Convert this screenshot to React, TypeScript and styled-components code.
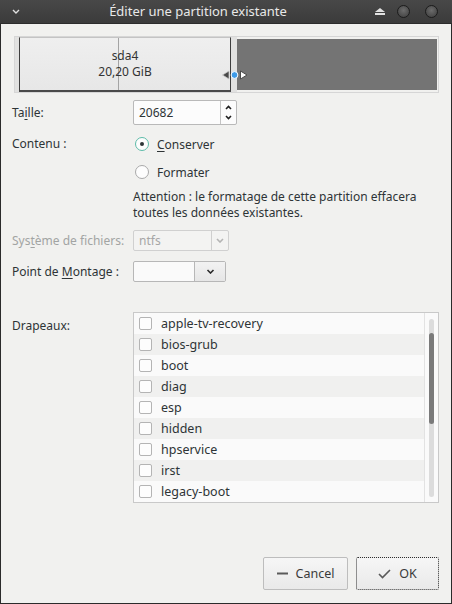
import React from 'react';
import styled, { createGlobalStyle } from 'styled-components';

const Global = createGlobalStyle`
  html, body { margin: 0; padding: 0; }
  body {
    font-family: "Noto Sans", "DejaVu Sans", sans-serif;
    font-size: 12px;
    color: #2e3436;
    background: #f1f1ef;
  }
  * { box-sizing: border-box; }
`;

const Window = styled.div`
  width: 452px;
  height: 604px;
  display: flex;
  flex-direction: column;
  background: #f1f1ef;
`;

const TitleBar = styled.div`
  height: 24px;
  flex: none;
  display: flex;
  align-items: center;
  background: linear-gradient(#484848, #3b3b3b);
  border-bottom: 1px solid #2c2c2c;
  color: #e8e8e8;
`;

const TitleLeft = styled.div`
  width: 28px;
  display: flex;
  align-items: center;
  padding-left: 12px;
`;

const TitleText = styled.div`
  flex: 1;
  text-align: center;
  font-size: 13px;
  line-height: 23px;
  white-space: nowrap;
`;

const TitleRight = styled.div`
  width: 84px;
  display: flex;
  align-items: center;
  padding-left: 7px;
`;

const WinCircle = styled.div<{ $ml: number }>`
  width: 13px;
  height: 13px;
  margin-left: ${p => p.$ml}px;
  border-radius: 50%;
  border: 1px solid #1c1c1c;
  background: radial-gradient(circle at 50% 40%, #6c6c6c, #4a4a4a 70%);
`;

const Body = styled.div`
  flex: 1;
  display: flex;
  flex-direction: column;
  border: 1px solid #2b2b2b;
  border-top: none;
  padding: 12px 12px 13px 11px;
`;

const PartFrame = styled.div`
  position: relative;
  margin-left: 2px;
  height: 57px;
  display: flex;
  border: 1px solid #d6d6d6;
`;

const Dotted = styled.div<{ $w: number }>`
  width: ${p => p.$w}px;
  flex: none;
  background-image: radial-gradient(#cfcfcf 0.6px, transparent 0.8px);
  background-size: 2px 2px;
`;

const PartBox = styled.div`
  position: relative;
  width: 212px;
  flex: none;
  display: flex;
  flex-direction: column;
  align-items: center;
  justify-content: center;
  line-height: 16px;
  color: #333;
  background: linear-gradient(#efefef, #e7e7e7);
  border-left: 1px solid #3e3e3e;
  border-right: 1px solid #3e3e3e;
  border-bottom: 2px solid #4a4a4a;
  border-top: 1px solid #c4c4c4;
  &::before {
    content: "";
    position: absolute;
    left: 98px;
    top: 0;
    bottom: 0;
    width: 1px;
    background: #a4a4a4;
  }
`;

const PartLabel = styled.span`
  position: relative;
`;

const Unallocated = styled.div`
  width: 200px;
  flex: none;
  margin: 2px 0;
  background: #747474;
`;

const Handle = styled.svg`
  position: absolute;
  left: 206px;
  top: 32px;
`;

const FieldRow = styled.div<{ $mt: number; $h?: number }>`
  display: flex;
  align-items: ${p => (p.$h ? 'center' : 'flex-start')};
  margin-top: ${p => p.$mt}px;
  ${p => (p.$h ? `height: ${p.$h}px;` : '')}
`;

const Label = styled.div<{ $disabled?: boolean; $pt?: number }>`
  width: 121px;
  flex: none;
  line-height: 16px;
  padding-top: ${p => p.$pt ?? 0}px;
  color: ${p => (p.$disabled ? '#a2a4a3' : '#2e3436')};
  white-space: nowrap;
`;

const Mn = styled.span`
  text-decoration: underline;
  text-underline-offset: 2px;
`;

const SpinBox = styled.div`
  width: 104px;
  height: 25px;
  display: flex;
  border: 1px solid #b9b9b9;
  border-radius: 2px;
  background: #fcfcfc;
`;

const SpinValue = styled.div`
  flex: 1;
  padding-left: 5px;
  line-height: 23px;
  border-right: 1px solid #c4c4c4;
`;

const SpinButtons = styled.div`
  width: 15px;
  display: flex;
  flex-direction: column;
  align-items: center;
  justify-content: space-around;
  padding: 2px 0;
`;

const ControlCol = styled.div`
  display: flex;
  flex-direction: column;
`;

const RadioRow = styled.div`
  height: 28px;
  display: flex;
  align-items: center;
  padding-left: 2px;
  margin-top: ${'-6px'};
  &:first-child { margin-top: 0; }
`;

const RadioLine = styled.div`
  height: 28px;
  display: flex;
  align-items: center;
  padding-left: 2px;
  gap: 8px;
`;

const RadioCircle = styled.div<{ $checked?: boolean }>`
  width: 14px;
  height: 14px;
  border-radius: 50%;
  border: 1px solid ${p => (p.$checked ? '#5dbba8' : '#a9a9a9')};
  background: #fdfdfd;
  display: flex;
  align-items: center;
  justify-content: center;
  &::after {
    content: "";
    width: 4px;
    height: 4px;
    border-radius: 50%;
    background: ${p => (p.$checked ? '#2e3436' : 'transparent')};
  }
`;

const Note = styled.div`
  margin-top: 3px;
  line-height: 16px;
  width: 300px;
`;

const Combo = styled.div<{ $w: number; $disabled?: boolean }>`
  width: ${p => p.$w}px;
  height: 21px;
  display: flex;
  border: 1px solid ${p => (p.$disabled ? '#d0d0d0' : '#b7b7b7')};
  border-radius: 2px;
  background: ${p => (p.$disabled ? '#f3f3f2' : '#fafafa')};
  color: ${p => (p.$disabled ? '#a6a6a6' : '#2e3436')};
`;

const ComboText = styled.div`
  flex: 1;
  padding-left: 5px;
  line-height: 19px;
`;

const ComboButton = styled.div<{ $w: number; $disabled?: boolean }>`
  width: ${p => p.$w}px;
  display: flex;
  align-items: center;
  justify-content: center;
  border-left: 1px solid ${p => (p.$disabled ? '#cfcfcf' : '#b7b7b7')};
  background: ${p => (p.$disabled ? 'transparent' : 'linear-gradient(#f2f2f2, #e6e6e6)')};
`;

const ListBox = styled.div`
  width: 307px;
  height: 191px;
  display: flex;
  border: 1px solid #c9c9c9;
  background: #fafafa;
`;

const Rows = styled.div`
  flex: 1;
  display: flex;
  flex-direction: column;
`;

const FlagRow = styled.div<{ $alt: boolean }>`
  height: 21px;
  display: flex;
  align-items: center;
  padding-left: 5px;
  gap: 9px;
  font-size: 12.5px;
  background: ${p => (p.$alt ? '#f0f0ef' : '#fafafa')};
`;

const CheckBox = styled.div`
  width: 13px;
  height: 13px;
  border: 1px solid #b4b4b4;
  border-radius: 2px;
  background: #fdfdfd;
`;

const ScrollCol = styled.div`
  width: 14px;
  border-left: 1px solid #e2e2e2;
  display: flex;
  justify-content: center;
  padding: 6px 0 5px;
`;

const Trough = styled.div`
  width: 5px;
  border-radius: 3px;
  background: #dcdcdc;
  display: flex;
  flex-direction: column;
`;

const Thumb = styled.div`
  margin-top: 14px;
  height: 91px;
  border-radius: 3px;
  background: #7a7a7a;
`;

const ButtonRow = styled.div`
  margin-top: auto;
  display: flex;
  justify-content: flex-end;
  gap: 8px;
`;

const Button = styled.div<{ $w: number; $focus?: boolean }>`
  width: ${p => p.$w}px;
  height: 33px;
  display: flex;
  align-items: center;
  justify-content: center;
  gap: 8px;
  font-size: 12.5px;
  color: #3a3a3a;
  border: 1px ${p => (p.$focus ? 'dotted #2e2e2e' : 'solid #bdbdbd')};
  border-radius: 2px;
  background: linear-gradient(#f6f6f6, #e9e9e9);
`;

const flags = [
  'apple-tv-recovery',
  'bios-grub',
  'boot',
  'diag',
  'esp',
  'hidden',
  'hpservice',
  'irst',
  'legacy-boot',
];

const Chevron = ({ color = '#2e3436', w = 8 }: { color?: string; w?: number }) => (
  <svg width={w} height={5} viewBox="0 0 8 5">
    <polyline points="1,1 4,4 7,1" fill="none" stroke={color} strokeWidth="1.6" />
  </svg>
);

export default function App() {
  return (
    <>
      <Global />
      <Window>
        <TitleBar>
          <TitleLeft>
            <svg width="8" height="5" viewBox="0 0 8 5">
              <polyline points="1,1 4,4 7,1" fill="none" stroke="#e0e0e0" strokeWidth="1.4" />
            </svg>
          </TitleLeft>
          <TitleText>Éditer une partition existante</TitleText>
          <TitleRight>
            <svg width="10" height="7" viewBox="0 0 10 7">
              <polygon points="5,0 10,4 0,4" fill="#e2e2e2" />
              <rect x="0" y="5" width="10" height="2" fill="#e2e2e2" />
            </svg>
            <WinCircle $ml={12} />
            <WinCircle $ml={15} />
          </TitleRight>
        </TitleBar>
        <Body>
          <PartFrame>
            <Dotted $w={4} />
            <PartBox>
              <PartLabel>sda4</PartLabel>
              <PartLabel>20,20 GiB</PartLabel>
            </PartBox>
            <Dotted $w={6} />
            <Unallocated />
            <Handle width="28" height="12" viewBox="0 0 28 12">
              <polygon points="1.5,6 8,2 8,10" fill="#4a4a4a" stroke="#c8c8c8" strokeWidth="0.8" />
              <circle cx="13.5" cy="6" r="3.4" fill="#3d9be9" stroke="#ffffff" strokeWidth="1" />
              <polygon points="26,6 19.5,2 19.5,10" fill="#ffffff" stroke="#4a4a4a" strokeWidth="1" />
            </Handle>
          </PartFrame>

          <FieldRow $mt={7} $h={25}>
            <Label>
              Ta<Mn>i</Mn>lle:
            </Label>
            <SpinBox>
              <SpinValue>20682</SpinValue>
              <SpinButtons>
                <svg width="7" height="5" viewBox="0 0 7 5">
                  <polyline points="1,4 3.5,1.5 6,4" fill="none" stroke="#1e1e1e" strokeWidth="1.6" />
                </svg>
                <svg width="7" height="5" viewBox="0 0 7 5">
                  <polyline points="1,1 3.5,3.5 6,1" fill="none" stroke="#1e1e1e" strokeWidth="1.6" />
                </svg>
              </SpinButtons>
            </SpinBox>
          </FieldRow>

          <FieldRow $mt={5}>
            <Label $pt={6}>Contenu :</Label>
            <ControlCol>
              <RadioLine>
                <RadioCircle $checked />
                <span>
                  <Mn>C</Mn>onserver
                </span>
              </RadioLine>
              <RadioLine>
                <RadioCircle />
                <span>Formater</span>
              </RadioLine>
              <Note>
                Attention : le formatage de cette partition effacera
                <br />
                toutes les données existantes.
              </Note>
            </ControlCol>
          </FieldRow>

          <FieldRow $mt={9} $h={21}>
            <Label $disabled>
              Sys<Mn>t</Mn>ème de fichiers:
            </Label>
            <Combo $w={96} $disabled>
              <ComboText>ntfs</ComboText>
              <ComboButton $w={17} $disabled>
                <Chevron color="#b4b4b4" />
              </ComboButton>
            </Combo>
          </FieldRow>

          <FieldRow $mt={10} $h={21}>
            <Label>
              Point de <Mn>M</Mn>ontage :
            </Label>
            <Combo $w={93}>
              <ComboText />
              <ComboButton $w={31}>
                <Chevron color="#2a2a2a" w={9} />
              </ComboButton>
            </Combo>
          </FieldRow>

          <FieldRow $mt={30}>
            <Label $pt={6}>Drapeaux:</Label>
            <ListBox>
              <Rows>
                {flags.map((f, i) => (
                  <FlagRow key={f} $alt={i % 2 === 1}>
                    <CheckBox />
                    <span>{f}</span>
                  </FlagRow>
                ))}
              </Rows>
              <ScrollCol>
                <Trough>
                  <Thumb />
                </Trough>
              </ScrollCol>
            </ListBox>
          </FieldRow>

          <ButtonRow>
            <Button $w={85}>
              <svg width="11" height="3" viewBox="0 0 11 3">
                <rect x="0" y="0.5" width="11" height="2" fill="#5a5a5a" />
              </svg>
              <span>Cancel</span>
            </Button>
            <Button $w={83} $focus>
              <svg width="13" height="10" viewBox="0 0 13 10">
                <polyline points="1,5 4.5,8.5 12,1" fill="none" stroke="#5a5a5a" strokeWidth="1.6" />
              </svg>
              <span>OK</span>
            </Button>
          </ButtonRow>
        </Body>
      </Window>
    </>
  );
}
